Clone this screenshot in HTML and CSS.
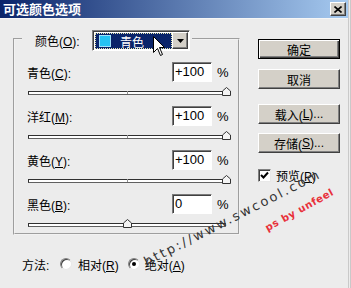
FILE: index.html
```html
<!DOCTYPE html>
<html lang="zh-CN">
<head>
    <meta charset="UTF-8">
    <title>可选颜色选项</title>
    <link rel="stylesheet" href="styles.css">
</head>
<body>
    <div class="window">
        <div class="titlebar">
            <span class="title">可选颜色选项</span>
            <span class="close">
                <svg width="8" height="7" viewBox="0 0 8 7"><path d="M0.5 0.5 L7.5 6.5 M7.5 0.5 L0.5 6.5" stroke="#000" stroke-width="1.6" fill="none"/></svg>
            </span>
        </div>

        <div class="content">
            <div class="left">
                <fieldset class="group">
                    <legend class="group-head">
                        <div class="head-row">
                            <span class="head-label">颜色(<u>O</u>):</span>
                            <div class="combo">
                                <div class="combo-value"><span class="swatch"></span>青色</div>
                                <div class="combo-btn">
                                    <svg width="7" height="4" viewBox="0 0 7 4"><path d="M0 0 H7 L3.5 4 Z" fill="#000"/></svg>
                                </div>
                            </div>
                        </div>
                    </legend>

                    <div class="group-body">
                        <div class="adj">
                            <div class="adj-row">
                                <span class="adj-label">青色(<u>C</u>):</span>
                                <span class="field">+100</span>
                                <span class="pct">%</span>
                            </div>
                            <div class="slider">
                                <div class="track"></div>
                                <svg class="thumb" style="left: calc(100% - 4px)" width="9" height="9" viewBox="0 0 9 9"><path d="M0.5 8.5 V4 L4.5 0.5 L8.5 4 V8.5 Z" fill="#f4f4f4" stroke="#333"/></svg>
                            </div>
                        </div>
                        <div class="adj">
                            <div class="adj-row">
                                <span class="adj-label">洋红(<u>M</u>):</span>
                                <span class="field">+100</span>
                                <span class="pct">%</span>
                            </div>
                            <div class="slider">
                                <div class="track"></div>
                                <svg class="thumb" style="left: calc(100% - 4px)" width="9" height="9" viewBox="0 0 9 9"><path d="M0.5 8.5 V4 L4.5 0.5 L8.5 4 V8.5 Z" fill="#f4f4f4" stroke="#333"/></svg>
                            </div>
                        </div>
                        <div class="adj">
                            <div class="adj-row">
                                <span class="adj-label">黄色(<u>Y</u>):</span>
                                <span class="field">+100</span>
                                <span class="pct">%</span>
                            </div>
                            <div class="slider">
                                <div class="track"></div>
                                <svg class="thumb" style="left: calc(100% - 4px)" width="9" height="9" viewBox="0 0 9 9"><path d="M0.5 8.5 V4 L4.5 0.5 L8.5 4 V8.5 Z" fill="#f4f4f4" stroke="#333"/></svg>
                            </div>
                        </div>
                        <div class="adj">
                            <div class="adj-row">
                                <span class="adj-label">黑色(<u>B</u>):</span>
                                <span class="field">0</span>
                                <span class="pct">%</span>
                            </div>
                            <div class="slider">
                                <div class="track"></div>
                                <svg class="thumb" style="left: calc(50% - 4px)" width="9" height="9" viewBox="0 0 9 9"><path d="M0.5 8.5 V4 L4.5 0.5 L8.5 4 V8.5 Z" fill="#f4f4f4" stroke="#333"/></svg>
                            </div>
                        </div>
                    </div>
                </fieldset>

                <div class="method">
                    <span class="method-label">方法:</span>
                    <span class="radio"></span>
                    <span class="radio-text">相对(<u>R</u>)</span>
                    <span class="radio checked"></span>
                    <span class="radio-text">绝对(<u>A</u>)</span>
                </div>
            </div>

            <div class="side">
                <div class="btn default">确定</div>
                <div class="btn btn-cancel">取消</div>
                <div class="btn btn-load">载入(<u>L</u>)...</div>
                <div class="btn btn-save">存储(<u>S</u>)...</div>
                <div class="check-row">
                    <span class="checkbox">
                        <svg width="9" height="9" viewBox="0 0 9 9"><path d="M1 4 L3.5 6.5 L8 1.5" stroke="#000" stroke-width="2" fill="none"/></svg>
                    </span>
                    <span>预览(<u>P</u>)</span>
                </div>
            </div>
        </div>

        <svg class="cursor" width="13" height="21" viewBox="0 0 13 21"><path d="M0.5 0.5 V16.5 L4.5 12.5 L7.5 19.5 L9.5 18.5 L6.5 11.5 H11.5 Z" fill="#fff" stroke="#000"/></svg>

        <div class="mark mark-url">http://www.swcool.com</div>
        <div class="mark mark-ps">ps by unfeel</div>
    </div>
</body>
</html>
```

FILE: styles.css
```css
* {
    box-sizing: border-box;
}

body {
    margin: 0;
    background: #ececec;
    font-family: "Liberation Sans", "Noto Sans CJK SC", sans-serif;
    font-size: 12px;
    color: #000;
}

.window {
    position: relative;
    width: 351px;
    height: 288px;
    overflow: hidden;
    background: #ececec;
    border-right: 3px double #c9c9c9;
}

.titlebar {
    height: 19px;
    display: flex;
    align-items: center;
    justify-content: space-between;
    padding: 0 2px 0 3px;
    background: linear-gradient(to right, #0a246a, #a6caf0);
    border-bottom: 1px solid #f6f6f6;
}

.title {
    color: #fff;
    font-family: "Noto Sans CJK SC", sans-serif;
    font-weight: bold;
    font-size: 13px;
    line-height: 18px;
}

.close {
    width: 16px;
    height: 14px;
    display: flex;
    align-items: center;
    justify-content: center;
    background: #d4d0c8;
    border: 1px solid;
    border-color: #fff #404040 #404040 #fff;
    box-shadow: inset -1px -1px #808080;
}

.content {
    display: flex;
    padding-left: 13px;
}

.left {
    width: 227px;
}

/* colour group */
.group {
    margin: 11px 0 0;
    padding: 0;
    width: 227px;
    border: 2px groove #f2f2f2;
}

.group-head {
    margin-left: 7px;
    padding: 0 2px 0 13px;
    height: 17px;
}

.head-row {
    display: flex;
    align-items: center;
    height: 21px;
}

.head-label {
    width: 57px;
}

.combo {
    display: flex;
    width: 98px;
    height: 21px;
    padding: 1px;
    background: #fff;
    border: 1px solid;
    border-color: #808080 #fff #fff #808080;
    box-shadow: inset 1px 1px #404040;
}

.combo-value {
    flex: 1;
    display: flex;
    align-items: center;
    margin: 1px 0 0 1px;
    background: #0a246a;
    outline: 1px dotted #e8e8b0;
    outline-offset: -1px;
    color: #fff;
    font-family: "Noto Sans CJK SC", sans-serif;
}

.swatch {
    width: 12px;
    height: 12px;
    margin: 0 9px 0 4px;
    background: #25c3f3;
    border: 1px solid #9fe0f8;
}

.combo-btn {
    width: 16px;
    display: flex;
    align-items: center;
    justify-content: center;
    background: #d4d0c8;
    border: 1px solid;
    border-color: #fff #404040 #404040 #fff;
    box-shadow: inset -1px -1px #808080;
}

.group-body {
    padding: 15px 8px 4px 12px;
}

.adj-row {
    display: flex;
    align-items: center;
    height: 20px;
}

.adj-label {
    width: 145px;
}

.field {
    width: 40px;
    height: 20px;
    padding-left: 2px;
    background: #fff;
    border: 1px solid;
    border-color: #7a7a7a #fff #fff #7a7a7a;
    box-shadow: inset 1px 1px #404040;
    font-size: 13px;
    line-height: 18px;
}

.pct {
    margin-left: 5px;
    font-size: 13px;
}

.slider {
    position: relative;
    width: 198px;
    height: 10px;
    margin: 5px 0 9px 1px;
}

.adj:last-child .slider {
    margin-bottom: 0;
}

.track {
    position: absolute;
    top: 4px;
    left: 0;
    right: 0;
    height: 4px;
    background: #fff;
    border: 1px solid;
    border-color: #303030 #909090 #606060 #303030;
}

.track::after {
    content: "";
    position: absolute;
    left: 98px;
    top: -1px;
    width: 1px;
    height: 3px;
    background: #909090;
}

.thumb {
    position: absolute;
    top: 0;
}

/* method */
.method {
    display: flex;
    align-items: center;
    height: 16px;
    margin-top: 21px;
    padding-left: 9px;
}

.method-label {
    width: 38px;
}

.radio {
    position: relative;
    width: 12px;
    height: 12px;
    margin-right: 6px;
    border-radius: 50%;
    background: #fff;
    border: 1px solid;
    border-color: #808080 #e8e8e8 #e8e8e8 #808080;
    box-shadow: inset 1px 1px #404040;
}

.radio.checked::after {
    content: "";
    position: absolute;
    left: 3px;
    top: 3px;
    width: 4px;
    height: 4px;
    border-radius: 50%;
    background: #000;
}

.radio-text {
    margin-right: 9px;
}

.radio-text:last-child {
    margin-left: -1px;
}

/* buttons */
.side {
    margin-left: 18px;
    padding-top: 20px;
    width: 82px;
}

.btn {
    width: 82px;
    height: 20px;
    display: flex;
    align-items: center;
    justify-content: center;
    background: #d4d0c8;
    border: 1px solid;
    border-color: #fff #404040 #404040 #fff;
    box-shadow: inset -1px -1px #808080;
}

.btn.default {
    border-color: #000;
    box-shadow: inset 1px 1px #fff, inset -1px -1px #404040, inset -2px -2px #808080;
}

.btn-cancel {
    margin-top: 10px;
}

.btn-load {
    margin-top: 15px;
}

.btn-save {
    margin-top: 9px;
}

.check-row {
    display: flex;
    align-items: center;
    margin-top: 14px;
}

.checkbox {
    width: 13px;
    height: 13px;
    margin-right: 5px;
    display: flex;
    align-items: center;
    justify-content: center;
    background: #fff;
    border: 1px solid;
    border-color: #808080 #e8e8e8 #e8e8e8 #808080;
    box-shadow: inset 1px 1px #404040;
}

/* overlays */
.cursor {
    position: absolute;
    left: 153px;
    top: 36px;
}

.mark {
    position: absolute;
    white-space: nowrap;
    transform-origin: 0 100%;
    font-family: "DejaVu Sans", sans-serif;
}

.mark-url {
    left: 148px;
    top: 255px;
    font-size: 13px;
    line-height: 14px;
    letter-spacing: 2.2px;
    color: #333;
    transform: rotate(-27deg);
}

.mark-ps {
    left: 269px;
    top: 222px;
    font-size: 10px;
    line-height: 12px;
    letter-spacing: 0.6px;
    font-weight: bold;
    color: #e8303a;
    transform: rotate(-29deg);
}
```
